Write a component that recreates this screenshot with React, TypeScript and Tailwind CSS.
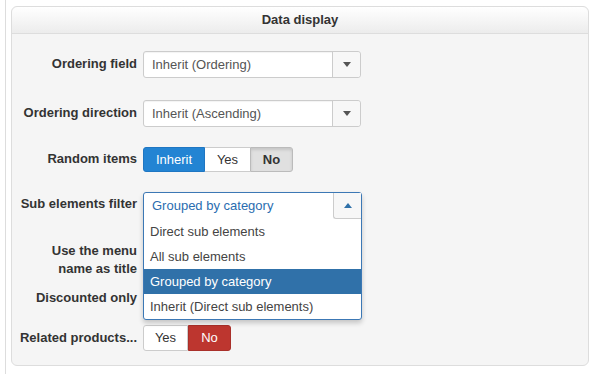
const FONT = { fontFamily: '"Helvetica Neue", "Liberation Sans", Arial, sans-serif' }

function Caret({ up = false }: { up?: boolean }) {
  return (
    <svg width="8" height="5" viewBox="0 0 8 5" className="block">
      {up ? <path d="M0 5 L4 0 L8 5 Z" fill="#3071a9" /> : <path d="M0 0 L8 0 L4 5 Z" fill="#555" />}
    </svg>
  )
}

function Select({ value }: { value: string }) {
  return (
    <div className="flex h-[27px] w-[218px] rounded-[3px] border border-[#ccc] bg-white text-[13px] text-[#555] shadow-[inset_0_1px_1px_rgba(0,0,0,0.05)]">
      <div className="flex flex-1 items-center pl-[8px]">{value}</div>
      <div className="flex w-[28px] items-center justify-center rounded-r-[3px] border-l border-[#ccc] bg-[#f7f7f7]">
        <Caret />
      </div>
    </div>
  )
}

function Label({ children, className = '' }: { children: React.ReactNode; className?: string }) {
  return (
    <div className={`w-[131px] shrink-0 pr-[6px] text-right text-[13px] font-bold leading-[18px] text-[#333] ${className}`}>
      {children}
    </div>
  )
}

const OPTIONS = ['Direct sub elements', 'All sub elements', 'Grouped by category', 'Inherit (Direct sub elements)']

export default function App() {
  return (
    <div style={FONT} className="h-[374px] w-[591px] bg-white pl-[5px]">
      <div className="h-full border-l border-[#ddd] pl-[5px] pt-[6px]">
        <div className="relative h-[360px] w-[578px] rounded-[6px] border border-[#ddd] bg-[#f5f5f5]">
          <div className="flex h-[27px] items-center justify-center rounded-t-[6px] border-b border-[#ddd] bg-gradient-to-b from-white to-[#ececec] text-[13px] font-bold text-[#333]">
            Data display
          </div>

          <div className="flex flex-col">
            <div className="mt-[17px] flex items-start">
              <Label className="pt-[4px]">Ordering field</Label>
              <Select value="Inherit (Ordering)" />
            </div>

            <div className="mt-[22px] flex items-start">
              <Label className="pt-[4px]">Ordering direction</Label>
              <Select value="Inherit (Ascending)" />
            </div>

            <div className="mt-[20px] flex items-start">
              <Label className="pt-[3px]">Random items</Label>
              <div className="flex h-[25px] text-[13px]">
                <div className="flex w-[62px] items-center justify-center rounded-l-[3px] border border-[#1f76c2] bg-[#2384d3] text-white">Inherit</div>
                <div className="flex w-[45px] items-center justify-center border-y border-[#ccc] bg-white text-[#333]">Yes</div>
                <div className="flex w-[43px] items-center justify-center rounded-r-[3px] border border-[#bbb] bg-[#e0e0e0] font-bold text-[#333] shadow-[inset_0_2px_3px_rgba(0,0,0,0.12)]">No</div>
              </div>
            </div>

            <div className="relative mt-[20px] flex items-start">
              <Label className="pt-[3px]">Sub elements filter</Label>
              <div className="h-[26px] w-[218px]" />
              <div className="absolute left-[131px] top-0 z-10 w-[219px] rounded-[3px] border border-[#3c78b5] bg-white text-[13px] shadow-[0_3px_5px_rgba(0,0,0,0.2)]">
                <div className="flex h-[26px]">
                  <div className="flex flex-1 items-center pl-[8px] text-[#2a6db0]">Grouped by category</div>
                  <div className="flex w-[28px] items-center justify-center rounded-bl-[3px] border-b border-l border-[#ccc] bg-[#f7f7f7]">
                    <Caret up />
                  </div>
                </div>
                {OPTIONS.map(o => (
                  <div
                    key={o}
                    className={`flex h-[25px] items-center pl-[6px] ${o === 'Grouped by category' ? 'bg-[#3071a9] text-white' : 'text-[#444]'}`}
                  >
                    {o}
                  </div>
                ))}
              </div>
            </div>

            <div className="mt-[24px] flex items-start">
              <Label>Use the menu<br />name as title</Label>
            </div>

            <div className="mt-[11px] flex items-start">
              <Label>Discounted only</Label>
            </div>

            <div className="mt-[18px] flex items-start">
              <Label className="pt-[4px]">Related products...</Label>
              <div className="flex h-[26px] text-[13px]">
                <div className="flex w-[45px] items-center justify-center rounded-l-[3px] border border-[#ccc] bg-white text-[#333]">Yes</div>
                <div className="flex w-[43px] items-center justify-center rounded-r-[3px] border border-[#a9302a] bg-[#bd362f] text-white">No</div>
              </div>
            </div>
          </div>
        </div>
      </div>
    </div>
  )
}
